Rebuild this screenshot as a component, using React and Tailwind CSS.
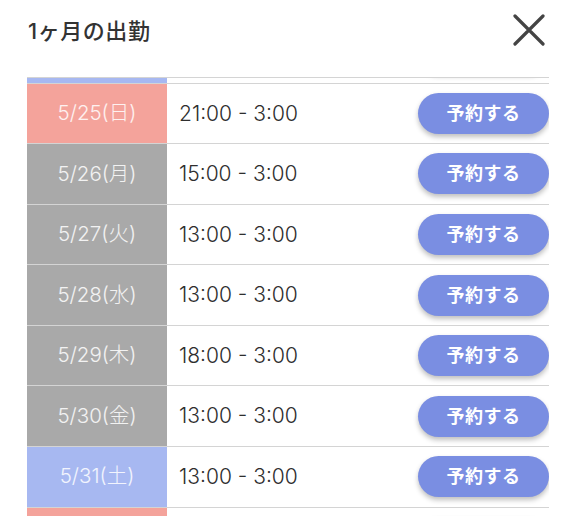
import React from "react";

const rows = [
  { date: "5/24(土)", time: "13:00 - 3:00", tone: "sat" },
  { date: "5/25(日)", time: "21:00 - 3:00", tone: "sun" },
  { date: "5/26(月)", time: "15:00 - 3:00", tone: "day" },
  { date: "5/27(火)", time: "13:00 - 3:00", tone: "day" },
  { date: "5/28(水)", time: "13:00 - 3:00", tone: "day" },
  { date: "5/29(木)", time: "18:00 - 3:00", tone: "day" },
  { date: "5/30(金)", time: "13:00 - 3:00", tone: "day" },
  { date: "5/31(土)", time: "13:00 - 3:00", tone: "sat" },
  { date: "6/1(日)", time: "13:00 - 3:00", tone: "sun" },
];

const toneClass = {
  sat: "bg-[#a7b8f1]",
  sun: "bg-[#f4a39b]",
  day: "bg-[#a9a9a9]",
};

const font = { fontFamily: '"Inter", "Noto Sans CJK JP", sans-serif' };

const ShiftRow = ({ row }) => (
  <div className="flex h-[60.57px] items-stretch border-b border-[#d4d4d4]">
    <div
      className={`w-[140px] shrink-0 flex items-center justify-center text-[20.5px] font-light text-white/85 ${toneClass[row.tone]}`}
    >
      {row.date}
    </div>
    <div className="flex-1 flex items-center pl-3 text-[21px] font-light text-[#2e2e2e]">
      {row.time}
    </div>
    <div className="flex items-center">
      <button className="w-[131px] h-[41px] rounded-full bg-[#7a8ee2] text-white text-[18px] font-semibold tracking-wide shadow-[0_3px_5px_rgba(0,0,0,0.25)]">
        予約する
      </button>
    </div>
  </div>
);

export default function App() {
  return (
    <div className="w-[576px] h-[516px] overflow-hidden bg-white" style={font}>
      <div className="h-[77px] flex items-start justify-between pl-[28px] pr-[30px]">
        <h1 className="mt-[15px] text-[22px] font-medium text-[#333] tracking-wide">
          1ヶ月の出勤
        </h1>
        <button className="mt-[13px] w-[34px] h-[34px] flex items-center justify-center text-[#444]">
          <svg width="32" height="32" viewBox="0 0 32 32" fill="none">
            <path d="M2 2 L30 30 M30 2 L2 30" stroke="currentColor" strokeWidth="3.2" strokeLinecap="round" />
          </svg>
        </button>
      </div>
      <div className="mx-[27px] h-[439px] overflow-hidden border-t border-[#d4d4d4]">
        <div className="-mt-[55px]">
          {rows.map((row) => (
            <ShiftRow key={row.date} row={row} />
          ))}
        </div>
      </div>
    </div>
  );
}
